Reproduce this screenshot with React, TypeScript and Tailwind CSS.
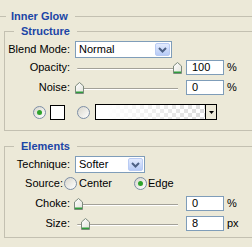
import type { ReactNode } from 'react';

const font = { fontFamily: '"Liberation Sans", Arial, sans-serif' };

function GroupHeader({ title }: { title: string }) {
  return (
    <div className="flex h-[14px] items-center">
      <div className="h-[7px] w-[10px] self-end border-l border-t border-[#c3c0b1]" />
      <span className="pl-[7px] pr-[7px] font-bold leading-[14px] text-[#1b45a6]">{title}</span>
      <div className="h-[7px] flex-1 self-end border-t border-[#c3c0b1]" />
    </div>
  );
}

function Group({ title, children, className }: { title: string; children: ReactNode; className: string }) {
  return (
    <div className={`ml-[4px] w-[270px] ${className}`}>
      <GroupHeader title={title} />
      <div className="border-b border-l border-[#c3c0b1]">{children}</div>
    </div>
  );
}

function Label({ children }: { children: ReactNode }) {
  return <span className="w-[64px] shrink-0 pl-[1px] text-right leading-[15px]">{children}</span>;
}

function Chevron() {
  return (
    <div className="m-px flex h-[13px] w-[15px] items-center justify-center rounded-[2px] border border-[#b9cbf3] bg-[linear-gradient(#e3ebfe,#b7cbf7)]">
      <svg width="9" height="6" viewBox="0 0 9 6">
        <path d="M1 1 L4.5 4.5 L8 1" fill="none" stroke="#4d6185" strokeWidth="2" />
      </svg>
    </div>
  );
}

function Select({ value, className }: { value: string; className: string }) {
  return (
    <div className={`ml-[5px] flex h-[17px] items-center border border-[#7f9db9] bg-white ${className}`}>
      <span className="flex-1 pl-[3px] leading-[15px]">{value}</span>
      <Chevron />
    </div>
  );
}

function NumInput({ value }: { value: string }) {
  return (
    <div className="ml-[4px] h-[15px] w-[38px] border border-[#7f9db9] bg-white pl-[5px] leading-[13px]">
      {value}
    </div>
  );
}

function Thumb({ left }: { left: number }) {
  return (
    <svg className="absolute top-[2px]" style={{ left }} width="9" height="12" viewBox="0 0 9 12">
      <defs>
        <linearGradient id="tg" x1="0" y1="0" x2="1" y2="1">
          <stop offset="0" stopColor="#ffffff" />
          <stop offset="1" stopColor="#e2e2da" />
        </linearGradient>
      </defs>
      <path d="M0.5 4 L4.5 0.5 L8.5 4 L8.5 11.5 L0.5 11.5 Z" fill="url(#tg)" stroke="#7d8a7d" />
      <path d="M1 9.5 H8 V11 H1 Z" fill="#2f9c3b" />
    </svg>
  );
}

function SliderRow({ label, value, thumb, unit, className }: { label: string; value: string; thumb: number; unit: string; className: string }) {
  return (
    <div className={`flex h-[15px] items-center ${className}`}>
      <Label>{label}</Label>
      <div className="relative ml-[5px] h-[15px] w-[107px] shrink-0">
        <div className="ml-[2px] mt-[8px] h-[2px] w-[101px] rounded-l-[1px] border-t border-[#a3a198] bg-white" />
        <Thumb left={thumb} />
      </div>
      <NumInput value={value} />
      <span className="ml-[3px] leading-[15px]">{unit}</span>
    </div>
  );
}

function Radio({ checked }: { checked?: boolean }) {
  return (
    <span className="flex h-[13px] w-[13px] shrink-0 items-center justify-center rounded-full border border-[#7c8ea6] bg-[linear-gradient(135deg,#d8d6cc,#ffffff)]">
      {checked && <span className="h-[5px] w-[5px] rounded-full bg-[#2ea32c]" />}
    </span>
  );
}

export default function App() {
  return (
    <div className="h-[247px] w-[252px] overflow-hidden bg-[#ece9d8] text-[11px] text-black" style={font}>
      <div className="flex h-[14px] items-center pt-0 mt-[9px]">
        <div className="h-[7px] w-[6px] self-end border-t border-[#c3c0b1]" />
        <span className="pl-[5px] pr-[7px] font-bold leading-[14px] text-[#1b45a6]">Inner Glow</span>
        <div className="h-[7px] flex-1 self-end border-t border-[#c3c0b1]" />
      </div>

      <Group title="Structure" className="mt-[1px]">
        <div className="pb-[10px] pl-[1px] pt-[3px]">
          <div className="flex h-[17px] items-center">
            <Label>Blend Mode:</Label>
            <Select value="Normal" className="w-[97px]" />
          </div>
          <SliderRow label="Opacity:" value="100" thumb={98} unit="%" className="mt-[2px]" />
          <SliderRow label="Noise:" value="0" thumb={0} unit="%" className="mt-[5px]" />
          <div className="mt-[9px] flex h-[16px] items-center">
            <span className="ml-[27px]"><Radio checked /></span>
            <div className="ml-[4px] h-[15px] w-[15px] border border-black bg-white" />
            <span className="ml-[12px]"><Radio /></span>
            <div className="ml-[5px] flex h-[16px] w-[122px] border border-black">
              <div className="flex-1 bg-[image:linear-gradient(to_right,#ffffff_10%,rgba(255,255,255,0.15)),repeating-conic-gradient(#d6d6d6_0_25%,#ffffff_0_50%)] bg-[size:100%_100%,8px_8px]" />
              <div className="flex w-[11px] items-center justify-center border-l border-black bg-[#ece9d8]">
                <svg width="5" height="3" viewBox="0 0 5 3">
                  <path d="M0 0 H5 L2.5 3 Z" fill="#000" />
                </svg>
              </div>
            </div>
          </div>
        </div>
      </Group>

      <Group title="Elements" className="mt-[8px]">
        <div className="pb-[6px] pl-[1px] pt-[3px]">
          <div className="flex h-[17px] items-center">
            <Label>Technique:</Label>
            <Select value="Softer" className="w-[70px]" />
          </div>
          <div className="mt-[4px] flex h-[13px] items-center">
            <span className="w-[57px] shrink-0 text-right leading-[13px]">Source:</span>
            <span className="ml-[1px]"><Radio /></span>
            <span className="ml-[2px] w-[55px] leading-[13px]">Center</span>
            <Radio checked />
            <span className="ml-[1px] leading-[13px]">Edge</span>
          </div>
          <SliderRow label="Choke:" value="0" thumb={-1} unit="%" className="mt-[6px]" />
          <SliderRow label="Size:" value="8" thumb={6} unit="px" className="mt-[5px]" />
        </div>
      </Group>
    </div>
  );
}
